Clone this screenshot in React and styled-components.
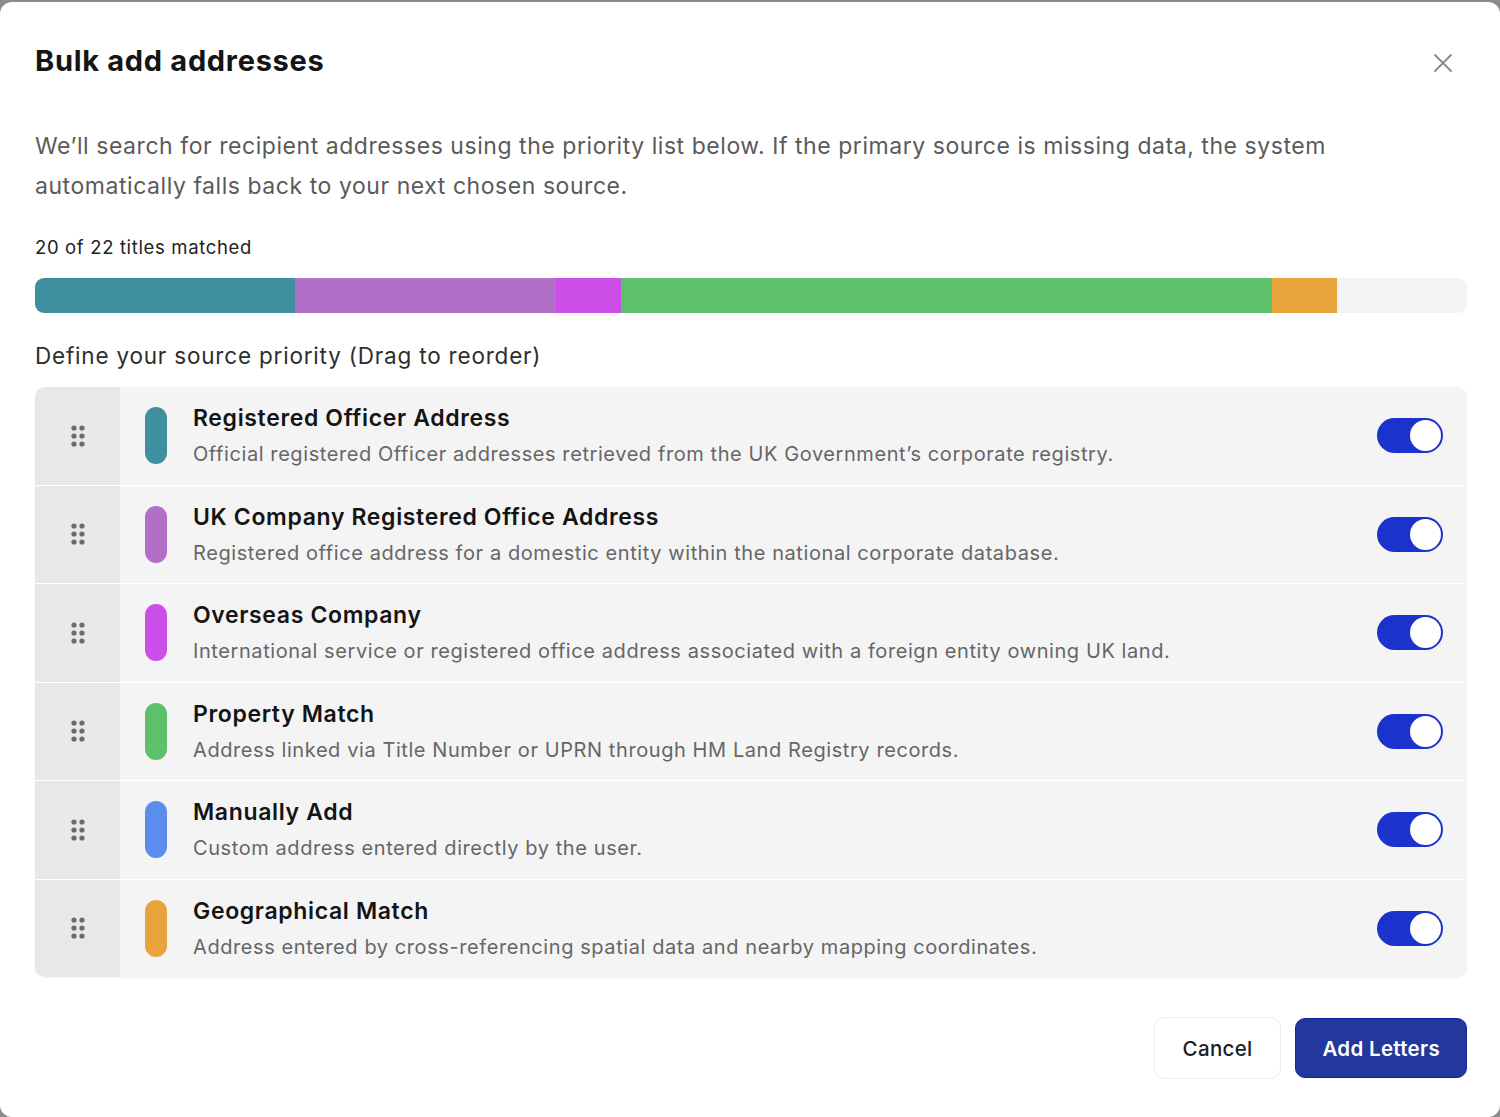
import styled, { createGlobalStyle } from "styled-components";

const GlobalStyle = createGlobalStyle`
  html, body {
    margin: 0;
    padding: 0;
    background: #8c8c8c;
  }
  body {
    font-family: Inter, "Liberation Sans", sans-serif;
  }
`;

const sources = [
  {
    color: "#3F8FA0",
    title: "Registered Officer Address",
    desc: "Official registered Officer addresses retrieved from the UK Government’s corporate registry.",
    count: 4,
  },
  {
    color: "#B16FC7",
    title: "UK Company Registered Office Address",
    desc: "Registered office address for a domestic entity within the national corporate database.",
    count: 4,
  },
  {
    color: "#CC4EE8",
    title: "Overseas Company",
    desc: "International service or registered office address associated with a foreign entity owning UK land.",
    count: 1,
  },
  {
    color: "#5CC16A",
    title: "Property Match",
    desc: "Address linked via Title Number or UPRN through HM Land Registry records.",
    count: 10,
  },
  {
    color: "#5B8DEF",
    title: "Manually Add",
    desc: "Custom address entered directly by the user.",
    count: 0,
  },
  {
    color: "#E9A33C",
    title: "Geographical Match",
    desc: "Address entered by cross-referencing spatial data and nearby mapping coordinates.",
    count: 1,
  },
];

const TOTAL = 22;

const Modal = styled.div`
  box-sizing: border-box;
  margin-top: 2px;
  height: 1115px;
  background: #fff;
  border-radius: 12px;
  padding: 40px 33px 0 35px;
  display: flex;
  flex-direction: column;
`;

const Header = styled.div`
  display: flex;
  justify-content: space-between;
  align-items: flex-start;
`;

const Title = styled.h1`
  margin: 0;
  font-size: 29px;
  font-weight: 700;
  color: #151515;
  letter-spacing: 0.7px;
  line-height: 38px;
`;

const CloseButton = styled.button`
  border: none;
  background: none;
  padding: 0;
  margin: 11px 14px 0 0;
  width: 20px;
  height: 20px;
  color: #888;
  cursor: pointer;
`;

const Description = styled.p`
  margin: 46px 0 0;
  font-size: 23px;
  letter-spacing: 0.55px;
  line-height: 40px;
  color: #5a5a5a;
  max-width: 1340px;
`;

const MatchedLabel = styled.div`
  margin-top: 29px;
  font-size: 18.5px;
  letter-spacing: 0.65px;
  color: #222;
  line-height: 24px;
`;

const Bar = styled.div`
  margin-top: 19px;
  height: 35px;
  border-radius: 9px;
  background: #f3f3f4;
  display: flex;
  overflow: hidden;
`;

const Segment = styled.div`
  height: 100%;
  background: ${(p) => p.$color};
`;

const SectionLabel = styled.div`
  margin-top: 28px;
  font-size: 22.5px;
  letter-spacing: 0.8px;
  color: #2e2e2e;
  line-height: 30px;
`;

const List = styled.div`
  margin-top: 16px;
  border-radius: 10px;
  overflow: hidden;
  background: #f4f4f5;
  display: flex;
  flex-direction: column;
  box-shadow: 0 1px 3px rgba(0, 0, 0, 0.04);
`;

const Row = styled.div`
  display: flex;
  height: 97.5px;
  & + & {
    border-top: 1.5px solid #fff;
  }
`;

const Handle = styled.div`
  width: 85px;
  flex: none;
  background: #e8e8e9;
  display: flex;
  align-items: center;
  justify-content: center;
  color: #6b6b6b;
`;

const Body = styled.div`
  flex: 1;
  display: flex;
  align-items: center;
  padding: 0 24px 0 25px;
`;

const Pill = styled.div`
  width: 22px;
  height: 57px;
  border-radius: 11px;
  background: ${(p) => p.$color};
  flex: none;
`;

const Texts = styled.div`
  flex: 1;
  margin-left: 26px;
  display: flex;
  flex-direction: column;
  gap: 8px;
`;

const RowTitle = styled.div`
  font-size: 23px;
  font-weight: 600;
  letter-spacing: 0.65px;
  color: #141414;
  line-height: 30px;
`;

const RowDesc = styled.div`
  font-size: 20px;
  letter-spacing: 0.58px;
  color: #666;
  line-height: 27px;
`;

const Toggle = styled.div`
  width: 66px;
  height: 35px;
  border-radius: 18px;
  background: #1b33cc;
  flex: none;
  position: relative;
  &::after {
    content: "";
    position: absolute;
    right: 2px;
    top: 2px;
    width: 31px;
    height: 31px;
    border-radius: 50%;
    background: #fff;
  }
`;

const Footer = styled.div`
  margin-top: 40px;
  display: flex;
  justify-content: flex-end;
  align-items: center;
  gap: 14px;
`;

const Button = styled.button`
  font-family: inherit;
  font-size: 20.5px;
  letter-spacing: 0.3px;
  border-radius: 10px;
  cursor: pointer;
  height: ${(p) => (p.$primary ? "60px" : "62px")};
  padding: 0 ${(p) => (p.$primary ? "26px" : "28px")};
  font-weight: ${(p) => (p.$primary ? 600 : 500)};
  color: ${(p) => (p.$primary ? "#fff" : "#1d1d1d")};
  background: ${(p) => (p.$primary ? "#22389c" : "#fff")};
  border: 1.5px solid ${(p) => (p.$primary ? "#15249a" : "#ececec")};
`;

const GripIcon = () => (
  <svg width="18" height="26" viewBox="0 0 18 26" fill="currentColor">
    {[0, 1, 2].map((r) =>
      [0, 1].map((c) => (
        <circle key={`${r}-${c}`} cx={5 + c * 8} cy={5 + r * 8} r="2.6" />
      ))
    )}
  </svg>
);

export default function App() {
  return (
    <>
      <GlobalStyle />
      <Modal>
        <Header>
          <Title>Bulk add addresses</Title>
          <CloseButton aria-label="Close">
            <svg width="20" height="20" viewBox="0 0 20 20" stroke="currentColor" strokeWidth="1.8" strokeLinecap="round">
              <path d="M2 2 L18 18 M18 2 L2 18" />
            </svg>
          </CloseButton>
        </Header>
        <Description>
          We’ll search for recipient addresses using the priority list below. If the primary source is missing data, the system automatically falls back to your next chosen source.
        </Description>
        <MatchedLabel>20 of 22 titles matched</MatchedLabel>
        <Bar>
          {sources
            .filter((s) => s.count > 0)
            .map((s) => (
              <Segment key={s.title} $color={s.color} style={{ width: `${(s.count / TOTAL) * 100}%` }} />
            ))}
        </Bar>
        <SectionLabel>Define your source priority (Drag to reorder)</SectionLabel>
        <List>
          {sources.map((s) => (
            <Row key={s.title}>
              <Handle>
                <GripIcon />
              </Handle>
              <Body>
                <Pill $color={s.color} />
                <Texts>
                  <RowTitle>{s.title}</RowTitle>
                  <RowDesc>{s.desc}</RowDesc>
                </Texts>
                <Toggle />
              </Body>
            </Row>
          ))}
        </List>
        <Footer>
          <Button>Cancel</Button>
          <Button $primary>Add Letters</Button>
        </Footer>
      </Modal>
    </>
  );
}
